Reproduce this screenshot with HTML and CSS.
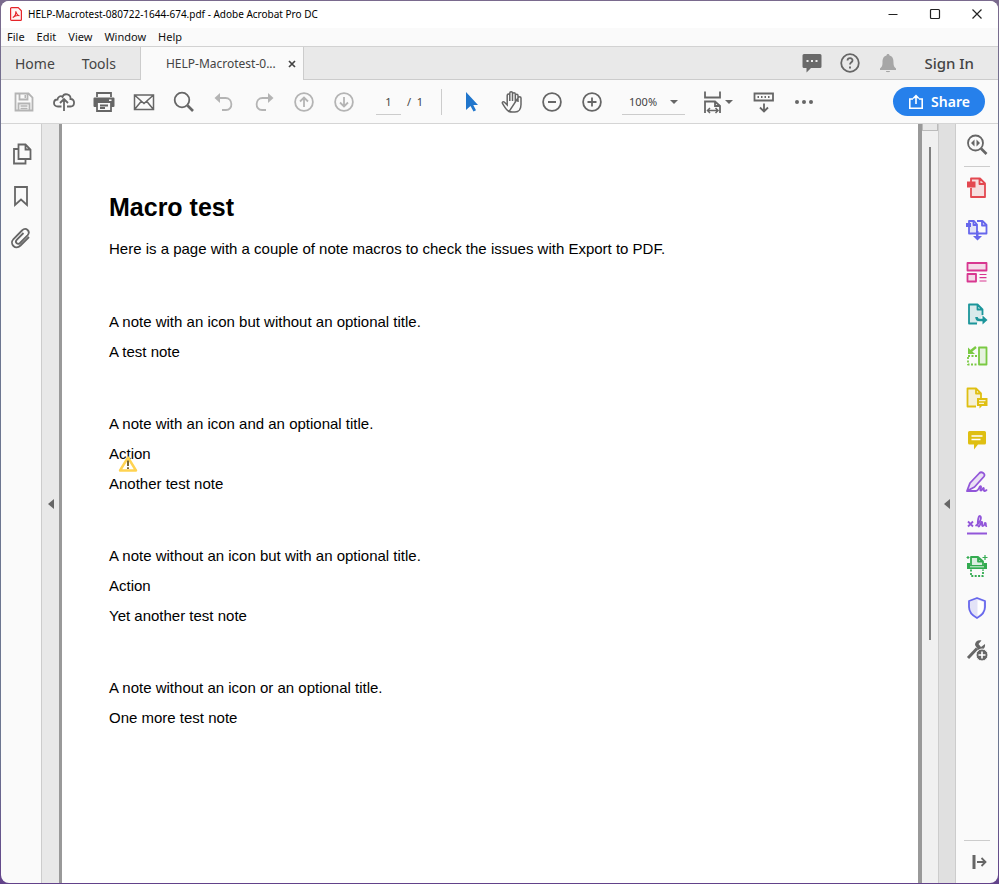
FILE: index.html
```html
<!DOCTYPE html>
<html lang="en">
<head>
    <meta charset="UTF-8">
    <title>HELP-Macrotest-080722-1644-674.pdf - Adobe Acrobat Pro DC</title>
    <meta name="viewport" content="width=device-width, initial-scale=1.0">
    <link rel="stylesheet" href="styles.css">
</head>
<body>
<div class="window">
    <header class="titlebar">
        <svg class="app-icon" viewBox="0 0 12 14"><path d="M1.5.6h6.700l3.200 3.200v8.700a.9.9 0 0 1-.9.9h-9a.9.9 0 0 1-.9-.9v-11a.9.9 0 0 1 .9-.9z" fill="#fff5f4" stroke="#e5252a" stroke-width="1.200"/><path d="M2.800 10.500C5 9.500 6 7 5.800 4.300c1 3 2 4.200 3.700 4.400-2.200-.5-4.700.2-6.700 1.800z" fill="none" stroke="#e5252a" stroke-width="1.100"/></svg>
        <span class="window-title">HELP-Macrotest-080722-1644-674.pdf - Adobe Acrobat Pro DC</span>
        <div class="window-controls">
            <button aria-label="Minimize"><svg viewBox="0 0 12 12"><path d="M1.500 6.500h9"/></svg></button>
            <button aria-label="Maximize"><svg viewBox="0 0 12 12"><rect x="1.500" y="1.500" width="9" height="9" rx="1"/></svg></button>
            <button aria-label="Close"><svg viewBox="0 0 12 12"><path d="M1.500 1.500l9 9M10.500 1.500l-9 9"/></svg></button>
        </div>
    </header>

    <nav class="menubar">
        <button>File</button>
        <button>Edit</button>
        <button>View</button>
        <button>Window</button>
        <button>Help</button>
    </nav>

    <div class="tabs">
        <button class="tab">Home</button>
        <button class="tab">Tools</button>
        <div class="tab-active">
            <span>HELP-Macrotest-0...</span>
            <button class="tab-close" aria-label="Close tab"><svg viewBox="0 0 8 8"><path d="M1 1l6 6M7 1L1 7" stroke="#444" stroke-width="1.700"/></svg></button>
        </div>
        <div class="account">
            <button aria-label="Comments"><svg class="icon" viewBox="0 0 24 24"><path d="M4 3h16a1.500 1.500 0 0 1 1.500 1.500v11A1.500 1.500 0 0 1 20 17h-9l-4.500 4.500V17H4a1.500 1.500 0 0 1-1.500-1.500v-11A1.500 1.500 0 0 1 4 3z" fill="#6a6a6a"/><path d="M6.500 9h2v2h-2zM11 9h2v2h-2zM15.500 9h2v2h-2z" fill="#eee"/></svg></button>
            <button aria-label="Help"><svg class="icon" viewBox="0 0 24 24"><g class="line"><circle cx="12" cy="12" r="8.800"/><path d="M9.500 9.500c.2-3.200 5.300-3 5 .1-.2 1.700-2.500 1.800-2.500 4"/></g><path d="M11 15.500h2v2h-2z" fill="#6a6a6a"/></svg></button>
            <button aria-label="Notifications"><svg class="icon" viewBox="0 0 24 24"><path d="M12 3c1 0 1.500.6 1.500 1.500C17 5.500 17.500 8 17.500 12c0 3 1 4.200 2.500 5.500V19H4v-1.500C5.500 16.200 6.500 15 6.500 12c0-4 .5-6.500 4-7.500C10.500 3.600 11 3 12 3zM9.800 20h4.400c-.5 1.600-3.900 1.600-4.400 0z" fill="#a6a6a6"/></svg></button>
            <button class="sign-in">Sign In</button>
        </div>
    </div>

    <div class="toolbar">
        <div class="group">
            <button aria-label="Save" disabled><svg class="icon pale" viewBox="0 0 24 24"><path class="line" d="M3.500 3.500h13l4 4v13h-17zM7.500 3.500v6h8v-6M6.500 20.500v-7h11v7"/><path class="line thin" d="M8.500 16h7M8.500 18.500h7"/><path d="M12.500 5h1.500v3h-1.500z"/></svg></button>
            <button aria-label="Upload to cloud"><svg class="icon" viewBox="0 0 24 24"><path class="line" d="M9.500 16.500H6c-5.500 0-5-7-.5-7 .3-3 3.500-4.200 5-2.500 1.500-4.500 8.500-3 8 2 5 0 4.500 7.500 0 7.500h-3.500M12 21V9.500M8 13l4-4 4 4"/></svg></button>
            <button aria-label="Print"><svg class="icon" viewBox="0 0 24 24"><path d="M2.500 7.500h19a1 1 0 0 1 1 1V16a1 1 0 0 1-1 1H19v-4H5v4H2.500a1 1 0 0 1-1-1V8.500a1 1 0 0 1 1-1z" fill="#666"/><path class="line" d="M5 7V3h14v4M5 13v8h14v-8M8 15.500h8M8 18h5"/><path d="M17 9.500h2.500v1.500H17z" fill="#fafafa"/></svg></button>
            <button aria-label="Email"><svg class="icon" viewBox="0 0 24 24"><path class="line thin" d="M2.500 5h19v14.500h-19zM2.500 5l9.500 8.500L21.500 5M2.500 19.500L9.500 11M21.500 19.500L14.500 11"/></svg></button>
            <button aria-label="Find"><svg class="icon" viewBox="0 0 24 24"><circle class="line" cx="10" cy="10" r="7.300"/><path class="line thick" d="M15.500 15.500l5.500 5.500"/></svg></button>
            <button aria-label="Undo" disabled><svg class="icon pale" viewBox="0 0 24 24"><path class="line" d="M5 8h8.500c7.500 0 8 12 .5 12h-4"/><path d="M2.500 8l5.500-5v10z"/></svg></button>
            <button aria-label="Redo" disabled><svg class="icon pale" viewBox="0 0 24 24"><path class="line" d="M19 8h-8.500c-7.500 0-8 12-.5 12h4"/><path d="M21.500 8L16 3v10z"/></svg></button>
            <button aria-label="Previous page" disabled><svg class="icon pale" viewBox="0 0 24 24"><g class="line"><circle cx="12" cy="12" r="8.900"/><path d="M12 17V7.500M8 11.500l4-4 4 4"/></g></svg></button>
            <button aria-label="Next page" disabled><svg class="icon pale" viewBox="0 0 24 24"><g class="line"><circle cx="12" cy="12" r="8.900"/><path d="M12 7v9.500M8 12.500l4 4 4-4"/></g></svg></button>
        </div>
        <div class="pager">
            <input type="text" value="1" aria-label="Page number">
            <span>/&nbsp; 1</span>
        </div>
        <div class="group cursor-tools">
            <button aria-label="Select"><svg class="icon" viewBox="0 0 24 24"><path d="M6 2v18l4.500-4 3 5.500 2.500-1.300-2.700-5.200H18z" fill="#2176cc"/></svg></button>
            <button aria-label="Pan"><svg class="icon" viewBox="0 0 24 24"><path class="line thin" d="M9 21.500c-3-1.500-4.500-5-6.500-8-.8-1.500 1-2.300 2-1.200L7.200 15V5.500c0-1.900 2.600-1.900 2.600 0V11M9.800 5V3c0-1.800 2.700-1.800 2.700 0v8M12.500 4c0-1.800 2.800-1.800 2.800 0v7.500M15.300 5.500c0-1.700 2.700-1.700 2.700 0V12M18 8c0-1.600 3-1.600 3 0v6.500c0 4-2 7.500-6 7.500-2 0-4.500.3-6-.5z"/></svg></button>
            <button aria-label="Zoom out"><svg class="icon" viewBox="0 0 24 24"><g class="line"><circle cx="12" cy="12" r="8.900"/><path d="M8 12h8"/></g></svg></button>
            <button aria-label="Zoom in"><svg class="icon" viewBox="0 0 24 24"><g class="line"><circle cx="12" cy="12" r="8.900"/><path d="M7.500 12h9M12 7.500v9"/></g></svg></button>
        </div>
        <div class="zoom">
            <select aria-label="Zoom level"><option>100%</option><option>150%</option></select>
            <svg class="caret" viewBox="0 0 8 8"><path d="M0 2h8L4 6z"/></svg>
        </div>
        <div class="group view-tools">
            <button class="fit" aria-label="Fit width"><svg class="icon" viewBox="0 0 24 24"><path class="line" d="M4 1.500V7.500h15V1.500M4 23V11.500h10l5 4.500v7M14 11.500V16h5"/><path class="line thin" d="M7 20.500h9.500M9 18l-2.500 2.500L9 23M14.500 18l2.500 2.500-2.500 2.500"/></svg><svg class="caret" viewBox="0 0 8 8"><path d="M0 2h8L4 6z"/></svg></button>
            <button aria-label="Keyboard"><svg class="icon" viewBox="0 0 24 24"><path class="line" d="M2.500 3.500h18.500v7H2.500zM12 13.500V21M8 17.500l4 4 4-4M5.500 7h1.500m2 0h1.500m2 0h1.500m2 0h1.500"/></svg></button>
            <button aria-label="More tools"><svg class="icon" viewBox="0 0 24 24" fill="#666"><circle cx="5" cy="12" r="2"/><circle cx="12" cy="12" r="2"/><circle cx="19" cy="12" r="2"/></svg></button>
        </div>
        <button class="share"><svg viewBox="0 0 16 16"><path d="M5 5H1.800v9.200h12.400V5H11M8 10V2M5.200 4.500L8 1.700l2.800 2.800" fill="none" stroke="#fff" stroke-width="1.600"/></svg>Share</button>
    </div>

    <main class="workspace">
        <aside class="rail">
            <button aria-label="Page thumbnails"><svg class="icon" viewBox="0 0 24 24"><path class="line" d="M9.500 2.500h7l5 5V17h-12zM16.500 2.500v5h5M9.500 7H5v14.500h11.500V17"/></svg></button>
            <button aria-label="Bookmarks"><svg class="icon" viewBox="0 0 24 24"><path class="line" d="M6 3h12v18l-6-5.500L6 21z"/></svg></button>
            <button aria-label="Attachments"><svg class="icon" viewBox="0 0 24 24"><path class="line" d="M20 11l-8.500 8.500c-5 5-11.500-1.500-7-6.500l8.500-8.500c4-4 9 1 5.500 4.800L11 17c-2.500 2.300-5.500-.8-3.300-3.200L14.500 7"/></svg></button>
        </aside>
        <button class="splitter splitter-left" aria-label="Open navigation pane"><svg viewBox="0 0 6 10"><path d="M6 0v10L0 5z"/></svg></button>

        <article class="page">
            <h1>Macro test</h1>
            <p class="intro">Here is a page with a couple of note macros to check the issues with Export to PDF.</p>
            <section>
                <p>A note with an icon but without an optional title.</p>
                <p>A test note</p>
            </section>
            <section>
                <p>A note with an icon and an optional title.</p>
                <p class="note-title">Action
                    <svg class="warning" viewBox="0 0 20 16"><path d="M10 1.500L18 14.500H2z" fill="#fff" stroke="#ffd351" stroke-width="2.400" stroke-linejoin="round"/><path d="M10 4.500v5.500M10 11.200v1.800" stroke="#594300" stroke-width="1.600"/></svg>
                </p>
                <p>Another test note</p>
            </section>
            <section>
                <p>A note without an icon but with an optional title.</p>
                <p>Action</p>
                <p>Yet another test note</p>
            </section>
            <section>
                <p>A note without an icon or an optional title.</p>
                <p>One more test note</p>
            </section>
        </article>

        <div class="scrollbar">
            <div class="scroll-top"></div>
            <div class="scroll-thumb"></div>
        </div>
        <button class="splitter splitter-right" aria-label="Toggle tools pane"><svg viewBox="0 0 6 10"><path d="M6 0v10L0 5z"/></svg></button>

        <aside class="tools">
            <button aria-label="Search tools"><svg class="icon" viewBox="0 0 24 24"><circle class="line" cx="10.500" cy="10" r="7.500"/><path class="line thick" d="M16 15.500l5.500 5.500"/><path d="M9.500 6.500v7L6 10zM11.500 6.500v7L15 10z" fill="#666"/></svg></button>
            <hr>
            <button aria-label="Create PDF"><svg class="icon red" viewBox="0 0 24 24"><path class="shape" d="M6 12v9h14V7.500l-5-5H6V6M14.500 2.500V8H20"/><path class="solid" d="M2 5.500h8.500v6H2z"/></svg></button>
            <button aria-label="Combine files"><svg class="icon blue" viewBox="0 0 24 24"><path class="shape" d="M4 15.500V3h5l3 3.500v9z"/><path class="outline" d="M12 3h5.500L21.500 7v8.500H12M17 3v4.500h4.500M8.500 3v4H12"/><path class="solid" d="M1 5h5v4H1zM11 13h2.500v5h3.500l-4.500 4.500L8 18h3z"/></svg></button>
            <button aria-label="Organize pages"><svg class="icon pink" viewBox="0 0 24 24"><path class="shape" d="M2.500 3h19v7.500h-19zM2.500 14h8.500v7.500H2.500z"/><path class="outline thin" d="M14.500 14.500h7M14.500 17.700h7M14.500 21h7"/></svg></button>
            <button aria-label="Export PDF"><svg class="icon teal" viewBox="0 0 24 24"><path class="shape" d="M12 21.500H4v-19h8.500l5 5V13M12.500 2.500v5h5"/><path class="outline bold" d="M11.500 15c0 2.500 1 3 3 3h4"/><path class="solid" d="M17.500 13.500l5 4.500-5 4.500z"/></svg></button>
            <button aria-label="Compress PDF"><svg class="icon green" viewBox="0 0 24 24"><path class="shape" d="M14 3.500h7.500v17H14z"/><path class="outline" d="M3 13v7.500h9M3 12h9" stroke-dasharray="2 1.500"/><path class="outline bold" d="M11 3L6 7"/><path class="solid" d="M3 3.500V10h7z"/></svg></button>
            <button aria-label="Edit PDF"><svg class="icon yellow" viewBox="0 0 24 24"><path class="shape" d="M11 20.500H2.500v-18H11l5 5V12M11 2.500v5h5"/><path class="solid" d="M12 12h10.500v8H17l-2.500 2.500V20H12z"/><path d="M14 14.700h6.500M14 17.300h5" stroke="#fff"/></svg></button>
            <button aria-label="Comment"><svg class="icon yellow" viewBox="0 0 24 24"><path class="solid" d="M4.500 3h15A1.500 1.500 0 0 1 21 4.500v10.500a1.500 1.500 0 0 1-1.500 1.500H13l-4 5v-5H4.500A1.500 1.500 0 0 1 3 15V4.500A1.500 1.500 0 0 1 4.500 3z"/><path d="M6.500 8h11M6.500 11.500h9" stroke="#fff" stroke-width="1.600"/></svg></button>
            <button aria-label="Fill and sign"><svg class="icon purple" viewBox="0 0 24 24"><path class="shape" d="M2 21l3-8L14.500 3c2-2 6.500 1 4.500 3.500L9.500 17z"/><path class="outline" d="M2 21h9c3 0 3.500-6 5-4.500.8 1.500-2 4 0 4 1.500 0 1.500-3 2.700-2.500.5.700-.5 3 1 3 1 0 1.500-.5 2.300-1.500"/></svg></button>
            <button aria-label="Request signatures"><svg class="icon purple" viewBox="0 0 24 24"><path class="outline" d="M2 21.500h20M3 9.500l5 5M8 9.500l-5 5M10.500 14c5-3 6.500-9 4.500-10s-3 10-1.500 10.500S16 9 17 10s-1 4.500 1 4 1.500-4 2.500-3-.5 3.500 1.500 3"/></svg></button>
            <button aria-label="Scan"><svg class="icon leaf" viewBox="0 0 24 24"><path class="shape" d="M6 11V3h7l5 4.500V11M13 3v4.500h5"/><path class="solid" d="M2 9h3v2h14V9h3v6H2z"/><path class="outline" d="M6 15.500v6.500h12v-6.500" stroke-dasharray="2 1.400"/><path class="outline thin" d="M20 1v5M17.500 3.500h5M3 2v3M1.500 3.500h3"/><path d="M5 12.800h14" stroke="#d5f0da"/></svg></button>
            <button aria-label="Protect"><svg class="icon blue" viewBox="0 0 24 24"><path class="shape" d="M12 2l8 3v6c0 5-2.500 8-8 11-5.500-3-8-6-8-11V5z"/><path d="M12.500 4l6 2v5c0 4-2 6.500-6 9z" fill="#fff"/></svg></button>
            <button aria-label="More tools"><svg class="icon" viewBox="0 0 24 24"><path class="line wide" d="M3 20L12 10.500"/><path d="M10 7c0-3.500 3-5.500 6.500-4.500L13.500 6l2.500 3 4-3c.6 4-2 6.500-6.500 6.500z" fill="#666"/><circle cx="17" cy="17" r="6" fill="#666" stroke="#fafafa"/><path d="M17 13.500v7M13.500 17h7" stroke="#fff" stroke-width="1.600"/></svg></button>
            <div class="tools-footer">
                <hr>
                <button aria-label="Collapse tools pane"><svg class="icon" viewBox="0 0 24 24"><path class="line wide" d="M9 5v14"/><path class="line" d="M12 12h8.500M16.500 8l4 4-4 4"/></svg></button>
            </div>
        </aside>
    </main>
</div>
</body>
</html>
```

FILE: styles.css
```css
* {
    box-sizing: border-box;
}

body {
    margin: 0;
    padding: 1px;
    height: 100vh;
    background: linear-gradient(#7a6a8e, #6c7690 20%, #6c7690 85%, #62428a);
    font-family: "Noto Sans", "Segoe UI", sans-serif;
    color: #444;
}

button, input, select {
    font: inherit;
    color: inherit;
    border: none;
    background: none;
    padding: 0;
    margin: 0;
}

button {
    display: flex;
    align-items: center;
    justify-content: center;
    cursor: pointer;
}

hr {
    width: 26px;
    height: 1px;
    margin: 0 auto;
    border: none;
    background-color: #ccc;
}

.window {
    display: flex;
    flex-direction: column;
    height: 100%;
    border-radius: 8px;
    overflow: hidden;
    background-color: #fafafa;
}

/* title and menu */
.titlebar {
    display: flex;
    align-items: center;
    height: 27px;
    padding: 0 0 2px 9px;
    background-color: #fff;
    color: #000;
    font-size: 10px;
}

.app-icon {
    width: 12px;
    height: 14px;
    margin-right: 6px;
}

.window-controls {
    display: flex;
    margin-left: auto;
}

.window-controls button {
    width: 42px;
    height: 24px;
}

.window-controls svg {
    width: 12px;
    height: 12px;
    fill: none;
    stroke: #222;
    stroke-width: 1.2;
}

.menubar {
    display: flex;
    gap: 12px;
    height: 19px;
    padding: 0 0 2px 6px;
    border-bottom: 1px solid #d2d2d2;
    color: #111;
    font-size: 11px;
}

/* tabs */
.tabs {
    display: flex;
    height: 33px;
    border-bottom: 1px solid #ccc;
    background-color: #e9e9e9;
    font-size: 14px;
}

.tab {
    padding: 0 13px 0 14px;
}

.tab-active {
    display: flex;
    align-items: center;
    gap: 12px;
    height: 33px;
    margin-left: 11px;
    padding: 0 7px 0 25px;
    border: 1px solid #ccc;
    border-width: 0 1px;
    background-color: #fafafa;
    font-size: 12px;
}

.tab-close svg {
    width: 8px;
    height: 8px;
}

.account {
    display: flex;
    align-items: center;
    gap: 14px;
    margin-left: auto;
    padding-right: 24px;
}

.account .sign-in {
    margin-left: 10px;
    font-size: 15px;
    font-weight: 500;
}

/* icons */
.icon {
    display: block;
    width: 24px;
    height: 24px;
    flex: none;
}

.line {
    fill: none;
    stroke: #666;
    stroke-width: 1.8;
}

.line.thin {
    stroke-width: 1.5;
}

.line.thick {
    stroke-width: 2.6;
}

.line.wide {
    stroke-width: 3;
}

.pale {
    fill: #b4b4b4;
}

.pale .line {
    stroke: #b4b4b4;
}

.shape, .outline {
    stroke: currentColor;
    stroke-width: 1.8;
    stroke-linejoin: round;
}

.shape {
    fill: currentColor;
    fill-opacity: 0.15;
}

.outline {
    fill: none;
}

.outline.thin {
    stroke-width: 1.2;
}

.outline.bold {
    stroke-width: 2.5;
}

.solid {
    fill: currentColor;
}

.red { color: #e34850; }
.blue { color: #6767ec; }
.pink { color: #d83790; }
.teal { color: #1b959a; }
.green { color: #7ac943; }
.yellow { color: #dfbf12; }
.purple { color: #9256d9; }
.leaf { color: #33ab50; }

.caret {
    width: 8px;
    height: 8px;
    fill: #666;
}

/* toolbar */
.toolbar {
    display: flex;
    align-items: center;
    height: 44px;
    padding: 0 13px 0 7px;
    border-bottom: 1px solid #d5d5d5;
    font-size: 11px;
}

.group {
    display: flex;
    align-items: center;
    gap: 8px;
}

.group button {
    width: 32px;
    height: 32px;
}

.pager {
    display: flex;
    align-items: center;
    gap: 6px;
    width: 66px;
    height: 26px;
    margin-left: 16px;
    border-right: 1px solid #ccc;
}

.pager input {
    width: 25px;
    height: 26px;
    border-bottom: 1px solid #ccc;
    text-align: center;
}

.cursor-tools {
    margin-left: 14px;
}

.zoom {
    display: grid;
    align-items: center;
    width: 63px;
    margin-left: 14px;
}

.zoom select, .zoom .caret {
    grid-area: 1 / 1;
}

.zoom select {
    width: 100%;
    height: 26px;
    padding-left: 7px;
    border-bottom: 1px solid #ccc;
    appearance: none;
}

.zoom .caret {
    justify-self: end;
    margin-right: 7px;
    pointer-events: none;
}

.view-tools {
    margin-left: 16px;
}

.group .fit {
    justify-content: flex-start;
    width: 39px;
}

.share {
    gap: 7px;
    width: 92px;
    height: 29px;
    margin-left: auto;
    border-radius: 15px;
    background-color: #2680eb;
    color: #fff;
    font-size: 14px;
    font-weight: 600;
}

.share svg {
    width: 16px;
    height: 16px;
}

/* document area */
.workspace {
    display: flex;
    flex: 1;
    min-height: 0;
}

.rail {
    width: 40px;
    padding-top: 9px;
}

.rail button, .tools button {
    width: 100%;
    height: 42px;
}

.splitter {
    width: 18px;
    border-left: 1px solid #ccc;
    background-color: #e8e8e8;
}

.splitter svg {
    width: 6px;
    height: 10px;
    fill: #666;
}

.splitter-right {
    width: 17px;
    background-color: #e0e0e0;
}

.page {
    flex: 1;
    padding: 67px 46px 0 47px;
    border: solid #999;
    border-width: 0 4px 0 3px;
    background-color: #fff;
    color: #000;
    font-family: "Liberation Sans", Arial, sans-serif;
    font-size: 15px;
    line-height: 20px;
}

.page h1 {
    margin: 0 0 16px;
    font-size: 25px;
    line-height: 32px;
}

.page p {
    margin: 0 0 10px;
}

.page .intro {
    margin-bottom: 53px;
}

.page section {
    margin-bottom: 52px;
}

.note-title {
    position: relative;
}

.warning {
    position: absolute;
    left: 9px;
    top: 12px;
    width: 20px;
    height: 16px;
}

.scrollbar {
    display: flex;
    flex-direction: column;
    align-items: center;
    width: 16px;
    background-color: #f0f0f0;
}

.scroll-top {
    width: 100%;
    height: 7px;
    margin-bottom: 16px;
    border: 1px solid #bbb;
    border-top: none;
    background-color: #e8e8e8;
}

.scroll-thumb {
    width: 2px;
    height: 65%;
    background-color: #808080;
}

.tools {
    display: flex;
    flex-direction: column;
    width: 43px;
    border-left: 1px solid #ccc;
}

.tools hr {
    flex: none;
}

.tools-footer {
    margin-top: auto;
}
```
